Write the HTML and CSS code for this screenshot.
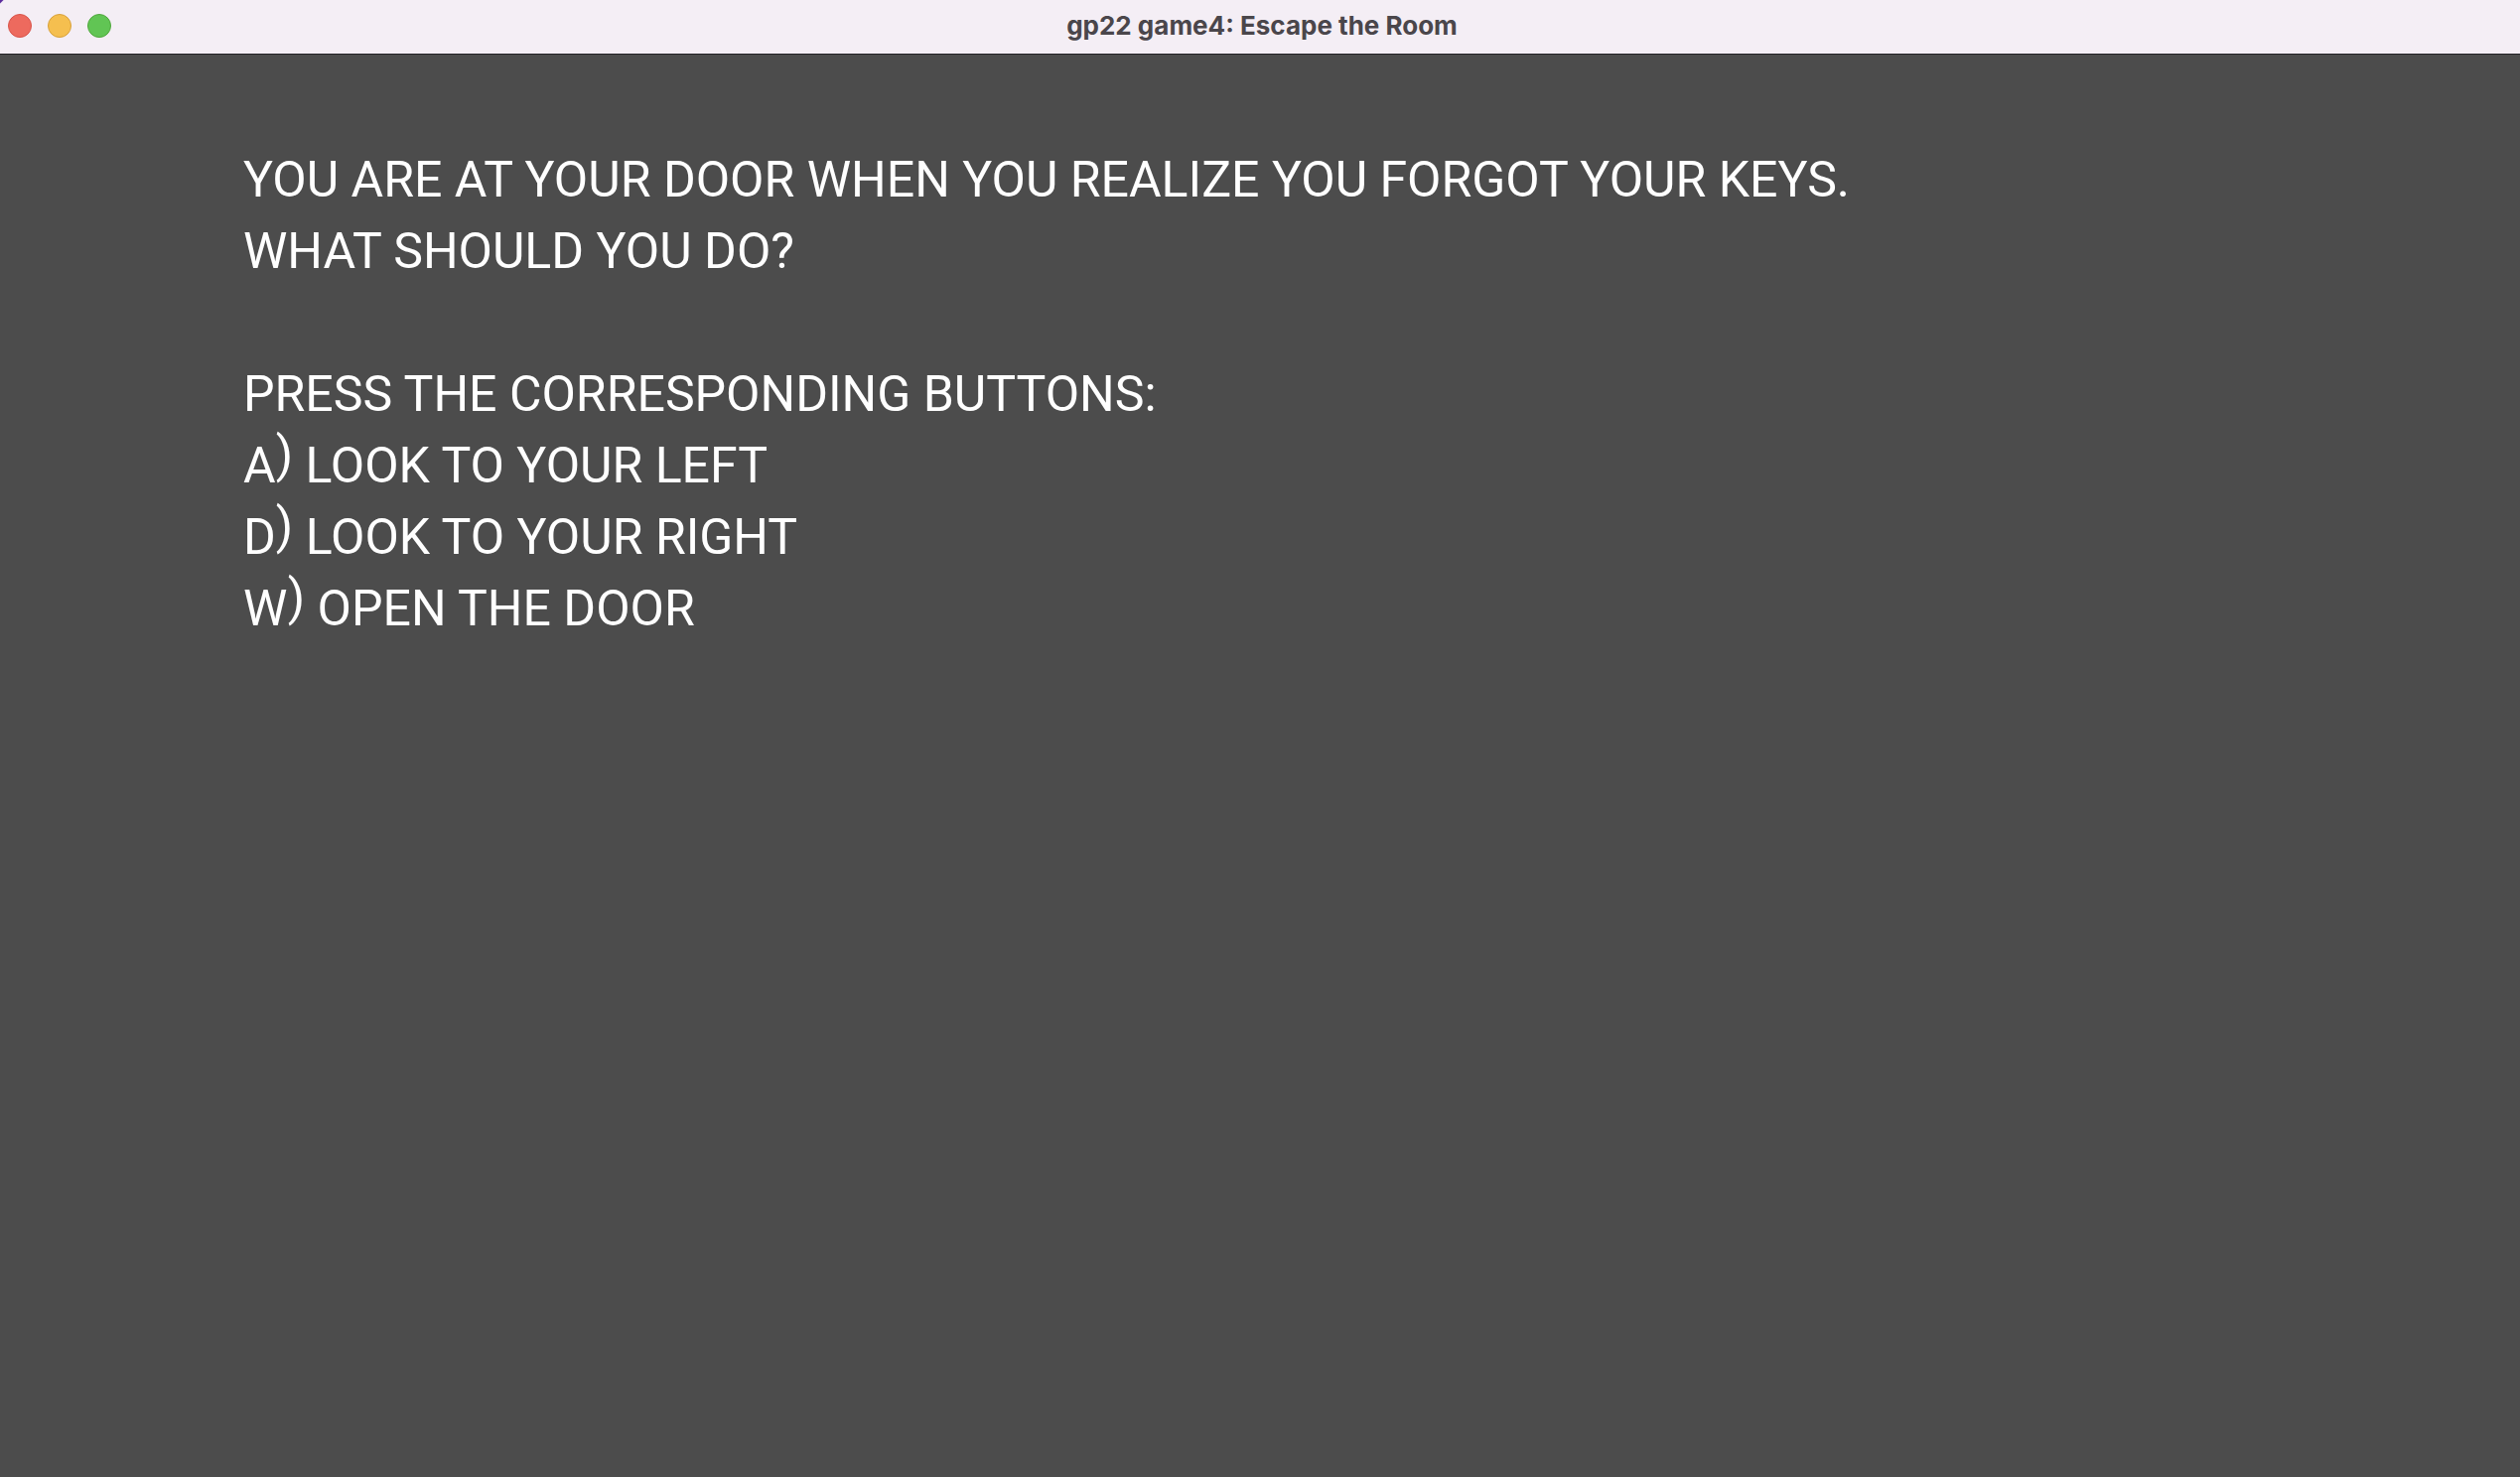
FILE: index.html
```html
<!DOCTYPE html>
<html lang="en">
<head>
<meta charset="utf-8">
<title>gp22 game4: Escape the Room</title>
<link rel="stylesheet" href="styles.css">
</head>
<body>
<header class="titlebar">
  <div class="controls">
    <button class="control close" type="button" aria-label="Close"></button>
    <button class="control minimize" type="button" aria-label="Minimize"></button>
    <button class="control zoom" type="button" aria-label="Zoom"></button>
  </div>
  <h1 class="title">gp22 game4: Escape the Room</h1>
</header>
<main class="scene">
  <p class="line">YOU ARE AT YOUR DOOR WHEN YOU REALIZE YOU FORGOT YOUR KEYS.</p>
  <p class="line">WHAT SHOULD YOU DO?</p>
  <p class="line prompt">PRESS THE CORRESPONDING BUTTONS:</p>
  <p class="line">A<span class="paren">)</span> LOOK TO YOUR LEFT</p>
  <p class="line">D<span class="paren">)</span> LOOK TO YOUR RIGHT</p>
  <p class="line">W<span class="paren">)</span> OPEN THE DOOR</p>
</main>
</body>
</html>
```

FILE: styles.css
```css
* { box-sizing: border-box; }
body {
  margin: 0;
  min-height: 100vh;
  display: flex;
  flex-direction: column;
  background: #4c4c4c;
}
.titlebar {
  display: grid;
  grid-template-columns: 1fr auto 1fr;
  align-items: center;
  height: 55px;
  padding: 0 4px 2px 8px;
  background: linear-gradient(135deg, #5a2a9c 2px, #f4eef5 3px);
  border-bottom: 1px solid #242226;
}
.controls { display: flex; gap: 16px; }
.control {
  width: 24px;
  height: 24px;
  padding: 0;
  border: 1px solid #d8544a;
  border-radius: 50%;
  background: #ed6a5e;
}
.minimize { background: #f5bf4f; border-color: #d8a13a; }
.zoom { background: #61c554; border-color: #4fa73c; }
.title {
  margin: 0;
  font: 700 26px/32px Inter, sans-serif;
  font-optical-sizing: none;
  color: #4a464b;
}
.scene {
  flex: 1;
  padding: 90px 245px;
  color: #fff;
  font: 400 50px/72px Roboto, sans-serif;
}
.line { margin: 0; }
.prompt { margin-top: 72px; }
.paren { position: relative; top: -11px; }
```
